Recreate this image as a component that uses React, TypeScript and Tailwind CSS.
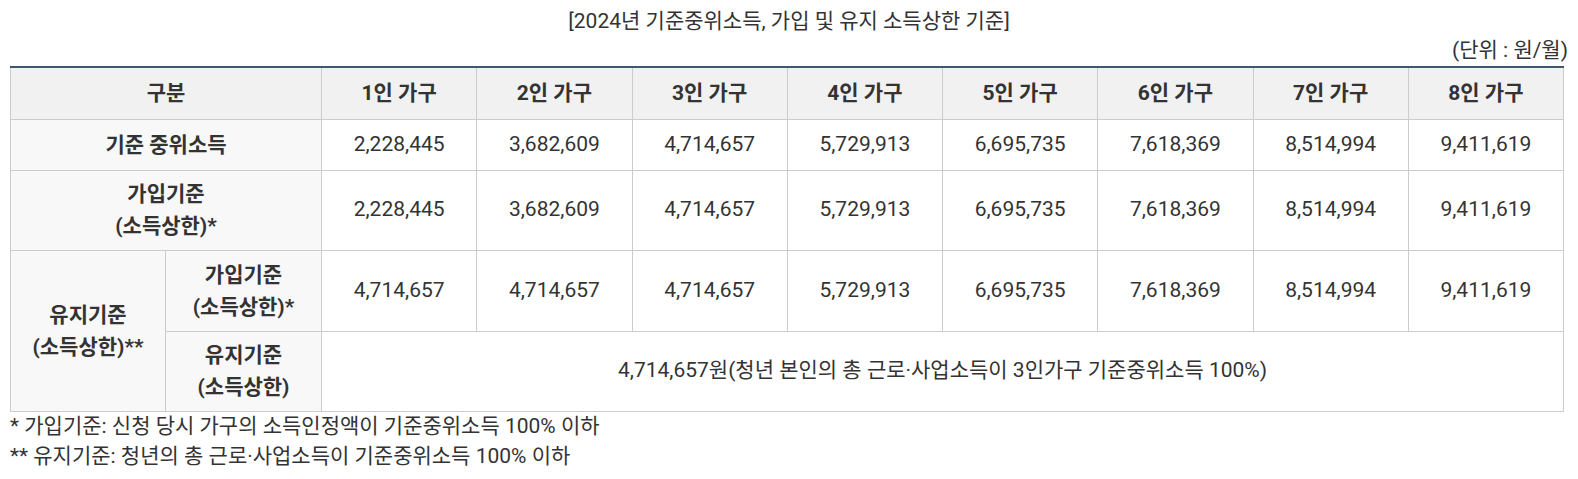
import React from "react";

const HEADS = ["1인 가구", "2인 가구", "3인 가구", "4인 가구", "5인 가구", "6인 가구", "7인 가구", "8인 가구"];

const MEDIAN = ["2,228,445", "3,682,609", "4,714,657", "5,729,913", "6,695,735", "7,618,369", "8,514,994", "9,411,619"];
const JOIN = ["2,228,445", "3,682,609", "4,714,657", "5,729,913", "6,695,735", "7,618,369", "8,514,994", "9,411,619"];
const KEEP_JOIN = ["4,714,657", "4,714,657", "4,714,657", "5,729,913", "6,695,735", "7,618,369", "8,514,994", "9,411,619"];

const th = "border border-[#cccccc] bg-[#f1f1f1] font-bold text-center";
const label = "border border-[#cccccc] bg-[#f8f8f8] font-bold text-center leading-[32px]";
const td = "border border-[#cccccc] bg-white text-center";

export default function App() {
  return (
    <div
      className="w-[1578px] h-[479px] bg-white text-[#333333] text-[21px] px-[10px] pt-[7px]"
      style={{ fontFamily: '"Roboto", "Noto Sans CJK KR", sans-serif' }}
    >
      <p className="text-center leading-[29px]">[2024년 기준중위소득, 가입 및 유지 소득상한 기준]</p>
      <p className="text-right leading-[29px]">(단위 : 원/월)</p>
      <table className="w-[1553px] table-fixed border-collapse border-t-2 border-t-[#3e5870] mt-[1px]">
        <colgroup>
          <col className="w-[155px]" />
          <col className="w-[156px]" />
          {HEADS.map((h) => (
            <col key={h} className="w-[155.25px]" />
          ))}
        </colgroup>
        <thead>
          <tr className="h-[52px]">
            <th colSpan={2} className={th}>구분</th>
            {HEADS.map((h) => (
              <th key={h} className={th}>{h}</th>
            ))}
          </tr>
        </thead>
        <tbody>
          <tr className="h-[51px]">
            <td colSpan={2} className={label}>기준 중위소득</td>
            {MEDIAN.map((v, i) => (
              <td key={i} className={td}>{v}</td>
            ))}
          </tr>
          <tr className="h-[80px]">
            <td colSpan={2} className={label}>
              가입기준
              <br />
              (소득상한)*
            </td>
            {JOIN.map((v, i) => (
              <td key={i} className={td}>{v}</td>
            ))}
          </tr>
          <tr className="h-[81px]">
            <td rowSpan={2} className={label}>
              유지기준
              <br />
              (소득상한)**
            </td>
            <td className={label}>
              가입기준
              <br />
              (소득상한)*
            </td>
            {KEEP_JOIN.map((v, i) => (
              <td key={i} className={td}>{v}</td>
            ))}
          </tr>
          <tr className="h-[80px]">
            <td className={label}>
              유지기준
              <br />
              (소득상한)
            </td>
            <td colSpan={8} className={td}>
              4,714,657원(청년 본인의 총 근로·사업소득이 3인가구 기준중위소득 100%)
            </td>
          </tr>
        </tbody>
      </table>
      <p className="leading-[30px] -mt-[1px]">* 가입기준: 신청 당시 가구의 소득인정액이 기준중위소득 100% 이하</p>
      <p className="leading-[30px]">** 유지기준: 청년의 총 근로·사업소득이 기준중위소득 100% 이하</p>
    </div>
  );
}
